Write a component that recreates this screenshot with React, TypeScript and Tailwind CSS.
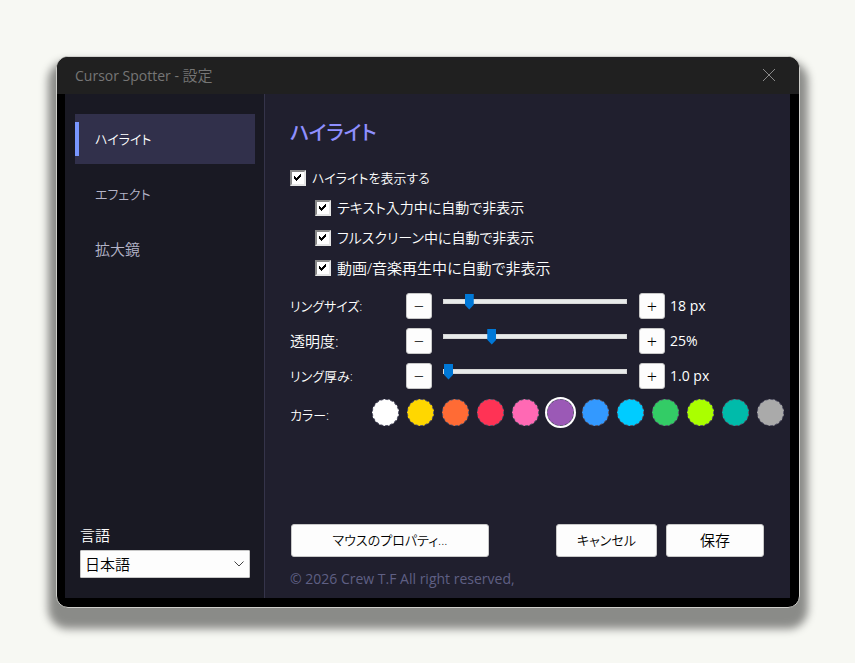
import { useState } from "react";
import clsx from "clsx";

type Slider = {
  id: string;
  label: string;
  size: string;
  min: number;
  max: number;
  step: number;
  format: (v: number) => string;
};

const KANA = "text-[13px]";
const KANJI = "text-[15px]";

const TABS = [
  { name: "ハイライト", size: KANA },
  { name: "エフェクト", size: KANA },
  { name: "拡大鏡", size: KANJI },
];

const CHECKS = [
  { id: "show", label: "ハイライトを表示する", size: KANA, nested: false },
  { id: "typing", label: "テキスト入力中に自動で非表示", size: "", nested: true },
  { id: "fullscreen", label: "フルスクリーン中に自動で非表示", size: "", nested: true },
  { id: "media", label: "動画/音楽再生中に自動で非表示", size: KANJI, nested: true },
];

const SLIDERS: Slider[] = [
  { id: "size", label: "リングサイズ:", size: KANA, min: 12, max: 62, step: 1, format: (v) => `${v} px` },
  { id: "opacity", label: "透明度:", size: KANJI, min: 0, max: 100, step: 1, format: (v) => `${v}%` },
  { id: "width", label: "リング厚み:", size: KANA, min: 1, max: 10, step: 0.5, format: (v) => `${v.toFixed(1)} px` },
];

const COLORS = [
  { name: "ホワイト", bg: "bg-white" },
  { name: "イエロー", bg: "bg-[#ffd700]" },
  { name: "オレンジ", bg: "bg-[#ff6b35]" },
  { name: "レッド", bg: "bg-[#ff3355]" },
  { name: "ピンク", bg: "bg-[#ff69b4]" },
  { name: "パープル", bg: "bg-[#9b59b6]" },
  { name: "ブルー", bg: "bg-[#3399ff]" },
  { name: "シアン", bg: "bg-[#00ccff]" },
  { name: "グリーン", bg: "bg-[#33cc66]" },
  { name: "ライム", bg: "bg-[#aaff00]" },
  { name: "ティール", bg: "bg-[#00bbaa]" },
  { name: "グレー", bg: "bg-[#aaaaaa]" },
];

const BUTTON =
  "h-[33px] rounded-[3px] border border-[#c8c8c8] bg-[#fdfdfd] pb-0.5 text-black hover:bg-[#e5f1fb]";

const STEP_BUTTON =
  "flex size-[26px] shrink-0 items-center justify-center rounded-[3px] border border-[#c8c8c8] bg-[#fdfdfd] text-[18px] font-light text-black";

function CheckRow({
  id,
  label,
  size,
  nested,
}: {
  id: string;
  label: string;
  size: string;
  nested: boolean;
}) {
  const [checked, setChecked] = useState(true);
  return (
    <div className={clsx("flex h-[30px] items-center gap-1.5", nested && "pl-[25px]")}>
      <span className="relative flex">
        <input
          id={id}
          type="checkbox"
          checked={checked}
          onChange={(e) => setChecked(e.target.checked)}
          className="size-4 appearance-none border-2 border-t-[#8a8a8a] border-r-[#e6e6e6] border-b-[#e6e6e6] border-l-[#8a8a8a] bg-white"
        />
        {checked && (
          <svg
            viewBox="0 0 16 16"
            className="pointer-events-none absolute inset-0 size-4"
            shapeRendering="crispEdges"
          >
            <path d="M4 6h1v1h1v1h1V7h1V6h1V5h1V4h1v3h-1v1H9v1H8v1H7v1H6v-1H5V9H4z" fill="#000" />
          </svg>
        )}
      </span>
      <label htmlFor={id} className={size}>
        {label}
      </label>
    </div>
  );
}

function SliderRow({
  slider,
  value,
  onChange,
}: {
  slider: Slider;
  value: number;
  onChange: (v: number) => void;
}) {
  const { id, label, size, min, max, step, format } = slider;
  return (
    <div className="flex h-[26px] items-center">
      <label htmlFor={id} className={clsx("w-[116px] shrink-0", size)}>
        {label}
      </label>
      <button
        type="button"
        aria-label={`${label} −`}
        className={STEP_BUTTON}
        onClick={() => onChange(Math.max(min, value - step))}
      >
        −
      </button>
      <input
        id={id}
        type="range"
        min={min}
        max={max}
        step={step}
        value={value}
        onChange={(e) => onChange(Number(e.target.value))}
        className="mr-3 ml-[11px] h-4 min-w-0 flex-1 appearance-none self-start bg-transparent [&::-webkit-slider-runnable-track]:h-[5px] [&::-webkit-slider-runnable-track]:border [&::-webkit-slider-runnable-track]:border-[#d6d6d6] [&::-webkit-slider-runnable-track]:bg-[#e7eaea] [&::-webkit-slider-thumb]:-mt-[6px] [&::-webkit-slider-thumb]:h-4 [&::-webkit-slider-thumb]:w-[9px] [&::-webkit-slider-thumb]:appearance-none [&::-webkit-slider-thumb]:bg-[#0078d7] [&::-webkit-slider-thumb]:[clip-path:polygon(0_0,100%_0,100%_70%,50%_100%,0_70%)]"
      />
      <button
        type="button"
        aria-label={`${label} +`}
        className={STEP_BUTTON}
        onClick={() => onChange(Math.min(max, value + step))}
      >
        +
      </button>
      <output htmlFor={id} className="w-[99px] shrink-0 pl-[5px] font-normal">
        {format(value)}
      </output>
    </div>
  );
}

export default function App() {
  const [tab, setTab] = useState(0);
  const [color, setColor] = useState(5);
  const [values, setValues] = useState<Record<string, number>>({
    size: 18,
    opacity: 25,
    width: 1,
  });

  return (
    <div className="flex min-h-screen bg-[#f7f8f3] pt-14 pr-[55px] pb-[55px] pl-14 font-['Open_Sans','Noto_Sans_CJK_JP',sans-serif] text-[14px] leading-[22px] font-[350] text-white [font-feature-settings:'palt']">
      <div className="flex flex-1 flex-col overflow-hidden rounded-xl border border-[#cfcfcb] bg-black shadow-[0_13px_8px_8px_rgba(0,0,0,0.44)]">
        <header className="flex h-[37px] items-center justify-between bg-[#202020] pr-[23px] pb-px pl-[18px] text-[#767676]">
          <h1 className="font-normal">
            Cursor Spotter - <span className={clsx(KANJI, "font-[350]")}>設定</span>
          </h1>
          <button type="button" aria-label="閉じる">
            <svg viewBox="0 0 14 14" className="size-3.5" fill="none" stroke="#8a8a8a">
              <path d="M1 1l12 12M13 1L1 13" />
            </svg>
          </button>
        </header>

        <div className="flex flex-1 pr-[9px] pb-[9px] pl-2">
          <aside className="flex w-[200px] shrink-0 flex-col border-r border-[#35344a] bg-[#191923] pt-5 pb-5">
            <nav className="flex flex-col gap-[5px] pr-[9px] pl-2.5">
              {TABS.map(({ name, size }, i) => (
                <button
                  key={name}
                  type="button"
                  onClick={() => setTab(i)}
                  className={clsx(
                    "flex h-[50px] items-center text-left",
                    size,
                    i === tab ? "bg-[#31304b] text-white" : "text-[#b4b4c8]",
                  )}
                >
                  <span className={clsx("mr-4 h-[34px] w-1", i === tab && "bg-[#7896ff]")} />
                  {name}
                </button>
              ))}
            </nav>
            <div className="mt-auto flex flex-col pr-3.5 pl-[15px] text-[15px]">
              <label htmlFor="lang" className="mb-1">
                言語
              </label>
              <div className="relative">
                <select
                  id="lang"
                  defaultValue="ja"
                  className="block h-7 w-full appearance-none rounded-[1px] border border-[#c8c8c8] bg-[#fdfdfd] pl-1 text-black"
                >
                  <option value="ja">日本語</option>
                  <option value="en">English</option>
                </select>
                <svg
                  viewBox="0 0 10 6"
                  className="pointer-events-none absolute top-[11px] right-[6px] h-1.5 w-2.5"
                  fill="none"
                  stroke="#444"
                >
                  <path d="M.5 .5L5 5L9.5 .5" />
                </svg>
              </div>
            </div>
          </aside>

          <main className="flex min-w-0 flex-1 flex-col bg-[#201f2e] pt-6 pr-[26px] pb-2 pl-[25px]">
            <h2 className="mb-[15px] text-[20px] leading-[30px] font-medium text-[#8f8fff]">
              {TABS[tab].name}
            </h2>

            {CHECKS.map((c) => (
              <CheckRow key={c.id} {...c} />
            ))}

            <div className="mt-2.5 flex flex-col gap-[9px]">
              {SLIDERS.map((s) => (
                <SliderRow
                  key={s.id}
                  slider={s}
                  value={values[s.id]}
                  onChange={(v) => setValues({ ...values, [s.id]: v })}
                />
              ))}
            </div>

            <div className="mt-2.5 -mr-5 flex items-end">
              <span className={clsx("w-[82px] shrink-0", KANA)}>カラー:</span>
              <div className="flex gap-2">
                {COLORS.map((c, i) => (
                  <button
                    key={c.name}
                    type="button"
                    aria-label={c.name}
                    aria-pressed={i === color}
                    onClick={() => setColor(i)}
                    className={clsx(
                      "size-[27px] shrink-0 rounded-full border border-dashed border-[#5a5a6e]",
                      c.bg,
                      i === color && "ring-2 ring-white",
                    )}
                  />
                ))}
              </div>
            </div>

            <div className="mt-auto flex gap-[9px] pl-px">
              <button type="button" className={clsx(BUTTON, KANA, "w-[198px]")}>
                マウスのプロパティ...
              </button>
              <button type="button" className={clsx(BUTTON, KANA, "ml-auto w-[101px]")}>
                キャンセル
              </button>
              <button type="button" className={clsx(BUTTON, KANJI, "w-[98px]")}>
                保存
              </button>
            </div>
            <p className="mt-[11px] font-normal text-[#5f5f84]">
              © 2026 Crew T.F All right reserved,
            </p>
          </main>
        </div>
      </div>
    </div>
  );
}
